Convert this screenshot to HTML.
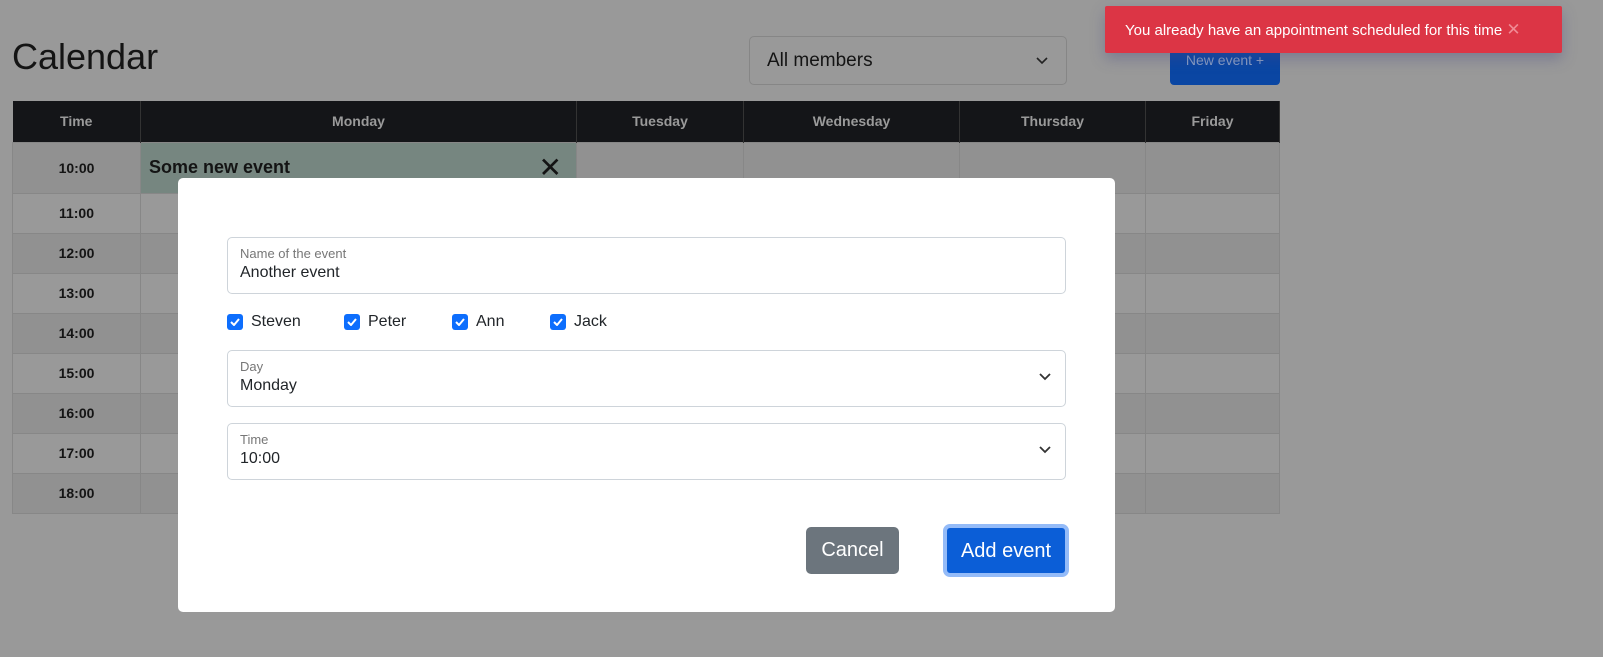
<!DOCTYPE html>
<html><head><meta charset="utf-8"><style>
*{box-sizing:border-box;margin:0;padding:0}
body{width:1603px;height:657px;background:#999;font-family:"Liberation Sans",sans-serif;position:relative;overflow:hidden;color:#212529}
.abs{position:absolute}
h1{position:absolute;left:12px;top:36px;font-size:36px;font-weight:400;color:#141414}
.sel{left:749px;top:36px;width:318px;height:49px;border:1px solid #868686;border-radius:5px;font-size:19px;padding:13px 17px;color:#141414}
.btnbg{left:1170px;top:36px;width:110px;height:49px;background:#0a46a3;border-radius:4px;color:#8a9fc4;font-size:14px;padding:16px 0;text-align:center;white-space:nowrap}
.toast{left:1105px;top:6px;width:457px;height:47px;background:#dc3545;color:#fff;font-size:15px;padding:14px 20px;box-shadow:0 6px 14px rgba(70,70,130,.35);border-radius:2px;white-space:nowrap}
table{position:absolute;left:12px;top:101px;border-collapse:collapse;width:1268px;font-size:14px}
th{background:#141518;color:#9a9a9a;height:41px;font-weight:700;border-right:1px solid #333}
td{height:40px;border:1px solid #878787;text-align:center;font-weight:700;color:#141414;background:#999}
tr.s td{background:#919191}
.modal{left:178px;top:178px;width:937px;height:434px;background:#fff;border-radius:5px}
.f{position:absolute;left:49px;width:839px;height:57px;border:1px solid #ced4da;border-radius:5px;padding:8px 12px}
.f .l{font-size:13px;color:#777;line-height:16px}
.f .v{font-size:16px;color:#212529;line-height:22px}
.chev{position:absolute;right:14px;top:22px}
.cb{position:absolute;top:135px;font-size:16px;display:flex;align-items:center}
.cb i{display:inline-block;width:16px;height:16px;background:#0d6efd;border-radius:3px;margin-right:8px;position:relative}
.b{position:absolute;border-radius:5px;color:#fff;font-size:20px;text-align:center;white-space:nowrap}
</style></head><body>
<h1>Calendar</h1>
<div class="abs sel">All members<svg style="position:absolute;right:18px;top:20px" width="12" height="8" viewBox="0 0 12 8"><path d="M1 1l5 5 5-5" stroke="#222" stroke-width="1.6" fill="none"/></svg></div>
<div class="abs btnbg">New event +</div>
<table>
<tr><th style="width:128px">Time</th><th style="width:436px">Monday</th><th style="width:167px">Tuesday</th><th style="width:216px">Wednesday</th><th style="width:186px">Thursday</th><th>Friday</th></tr>
<tr class="s"><td style="height:51px">10:00</td><td style="background:#768680;text-align:left;padding-left:8px;font-size:18px;position:relative">Some new event<span style="position:absolute;right:14px;top:8px;font-size:28px;font-weight:400">✕</span></td><td></td><td></td><td></td><td></td></tr>
<tr><td>11:00</td><td></td><td></td><td></td><td></td><td></td></tr>
<tr class="s"><td>12:00</td><td></td><td></td><td></td><td></td><td></td></tr>
<tr><td>13:00</td><td></td><td></td><td></td><td></td><td></td></tr>
<tr class="s"><td>14:00</td><td></td><td></td><td></td><td></td><td></td></tr>
<tr><td>15:00</td><td></td><td></td><td></td><td></td><td></td></tr>
<tr class="s"><td>16:00</td><td></td><td></td><td></td><td></td><td></td></tr>
<tr><td>17:00</td><td></td><td></td><td></td><td></td><td></td></tr>
<tr class="s"><td>18:00</td><td></td><td></td><td></td><td></td><td></td></tr>
</table>
<div class="abs toast">You already have an appointment scheduled for this time <span style="color:#f08a94;font-size:17px">✕</span></div>
<div class="abs modal">
<div class="f" style="top:59px"><div class="l">Name of the event</div><div class="v">Another event</div></div>
<div class="cb" style="left:49px"><i><svg class="abs" style="left:3px;top:4px" width="10" height="8" viewBox="0 0 10 8"><path d="M1 4l3 3 5-6" stroke="#fff" stroke-width="2" fill="none"/></svg></i>Steven</div>
<div class="cb" style="left:166px"><i><svg class="abs" style="left:3px;top:4px" width="10" height="8" viewBox="0 0 10 8"><path d="M1 4l3 3 5-6" stroke="#fff" stroke-width="2" fill="none"/></svg></i>Peter</div>
<div class="cb" style="left:274px"><i><svg class="abs" style="left:3px;top:4px" width="10" height="8" viewBox="0 0 10 8"><path d="M1 4l3 3 5-6" stroke="#fff" stroke-width="2" fill="none"/></svg></i>Ann</div>
<div class="cb" style="left:372px"><i><svg class="abs" style="left:3px;top:4px" width="10" height="8" viewBox="0 0 10 8"><path d="M1 4l3 3 5-6" stroke="#fff" stroke-width="2" fill="none"/></svg></i>Jack</div>
<div class="f" style="top:172px"><div class="l">Day</div><div class="v">Monday</div><svg class="chev" width="12" height="8" viewBox="0 0 12 8"><path d="M1 1l5 5 5-5" stroke="#333" stroke-width="1.8" fill="none"/></svg></div>
<div class="f" style="top:245px"><div class="l">Time</div><div class="v">10:00</div><svg class="chev" width="12" height="8" viewBox="0 0 12 8"><path d="M1 1l5 5 5-5" stroke="#333" stroke-width="1.8" fill="none"/></svg></div>
<div class="b" style="left:628px;top:349px;width:93px;height:47px;background:#6c757d;padding-top:12px">Cancel</div>
<div class="b" style="left:765px;top:346px;width:126px;height:53px;background:#0b5ed7;border:4px solid #94bbf8;border-radius:7px;padding-top:12px">Add event</div>
</div>
</body></html>
